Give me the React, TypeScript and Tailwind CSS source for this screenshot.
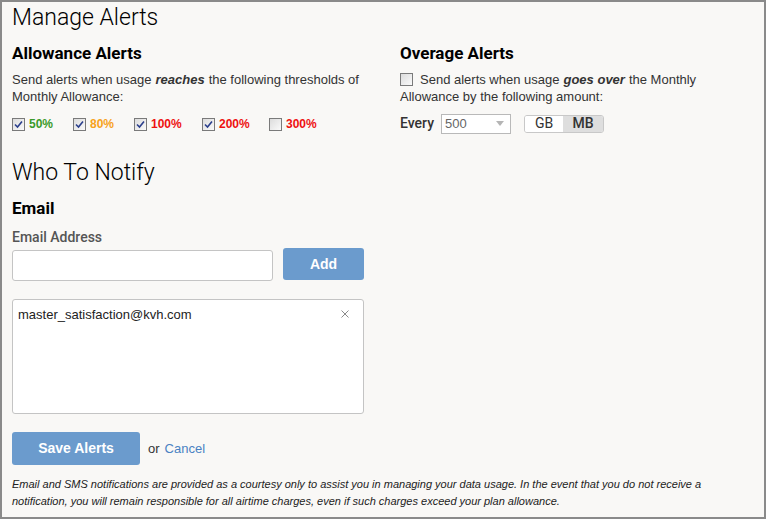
import React from "react";

const din = { fontFamily: "Roboto, 'Open Sans', sans-serif" };
const arial = { fontFamily: "'Liberation Sans', Arial, sans-serif" };

function Box({ checked }: { checked: boolean }) {
  return (
    <span className="inline-flex h-[13px] w-[13px] shrink-0 items-center justify-center border border-[#7a7a7a] bg-gradient-to-br from-[#dcdcdc] to-[#fafafa]">
      {checked ? (
        <svg width="9" height="9" viewBox="0 0 9 9">
          <path d="M1 4.5 L3.5 7 L8 1.5" fill="none" stroke="#2b3f8c" strokeWidth="1.6" />
        </svg>
      ) : null}
    </span>
  );
}

const thresholds = [
  { label: "50%", color: "text-[#3a9a2a]", checked: true, w: "w-[61px]" },
  { label: "80%", color: "text-[#f7a21b]", checked: true, w: "w-[61px]" },
  { label: "100%", color: "text-[#ee1111]", checked: true, w: "w-[68px]" },
  { label: "200%", color: "text-[#ee1111]", checked: true, w: "w-[67px]" },
  { label: "300%", color: "text-[#ee1111]", checked: false, w: "w-[67px]" },
];

export default function App() {
  return (
    <div className="h-[519px] w-[766px] overflow-hidden border-2 border-[#8a8a8a] bg-[#f9f8f6] text-[#333]" style={arial}>
      <div className="pl-[10px] pr-[10px]">
        <h1 className="pt-[1px] text-[23px] leading-[30px] font-light text-black" style={din}>
          Manage Alerts
        </h1>

        <div className="mt-[9px] flex">
          <div className="w-[388px]">
            <h2 className="text-[17px] leading-[22px] font-bold text-black" style={din}>
              Allowance Alerts
            </h2>
            <div className="mt-[7px] text-[13px] leading-[17px]">
              <div className="flex gap-[4px]">
                <span>Send alerts when usage</span>
                <b className="italic">reaches</b>
                <span>the following thresholds of</span>
              </div>
              <div>Monthly Allowance:</div>
            </div>
            <div className="mt-[11px] flex items-center">
              {thresholds.map((t) => (
                <label key={t.label} className={`flex items-center gap-[4px] ${t.w}`}>
                  <Box checked={t.checked} />
                  <span className={`text-[12px] leading-[17px] font-bold ${t.color}`}>{t.label}</span>
                </label>
              ))}
            </div>
          </div>

          <div className="w-[354px]">
            <h2 className="text-[17px] leading-[22px] font-bold text-black" style={din}>
              Overage Alerts
            </h2>
            <div className="mt-[7px] text-[13px] leading-[17px]">
              <div className="flex items-center gap-[4px]">
                <span className="mr-[3px] flex">
                  <Box checked={false} />
                </span>
                <span>Send alerts when usage</span>
                <b className="italic">goes over</b>
                <span>the Monthly</span>
              </div>
              <div>Allowance by the following amount:</div>
            </div>
            <div className="mt-[8px] flex items-center">
              <span className="text-[14px] font-medium text-[#333]" style={din}>
                Every
              </span>
              <div className="ml-[7px] flex h-[20px] w-[70px] items-center justify-between border border-[#b9b9b9] bg-white pl-[3px] pr-[6px]">
                <span className="text-[13px] text-[#666]">500</span>
                <svg width="8" height="5" viewBox="0 0 8 5">
                  <path d="M0 0 L8 0 L4 5 Z" fill="#b5b5b5" />
                </svg>
              </div>
              <div className="ml-[13px] flex h-[18px] overflow-hidden rounded-[3px] border border-[#c8c8c8] text-[14px]" style={din}>
                <span className="flex w-[38px] items-center justify-center bg-white text-[#333]">GB</span>
                <span className="flex w-[40px] items-center justify-center bg-[#dedede] font-medium text-[#333]">MB</span>
              </div>
            </div>
          </div>
        </div>

        <h1 className="mt-[24px] text-[23px] leading-[30px] font-light text-black" style={din}>
          Who To Notify
        </h1>
        <h2 className="mt-[9px] text-[17px] leading-[22px] font-bold text-black" style={din}>
          Email
        </h2>
        <label className="mt-[9px] block text-[14px] leading-[18px] font-medium text-[#555]" style={din}>
          Email Address
        </label>
        <div className="mt-[2px] flex items-start">
          <input className="mt-[2px] h-[31px] w-[261px] rounded-[3px] border border-[#c4c4c4] bg-white px-2 text-[13px] outline-none" />
          <button className="ml-[10px] h-[32px] w-[81px] rounded-[3px] bg-[#6b9bcd] text-[14px] font-bold text-white">Add</button>
        </div>

        <div className="mt-[18px] h-[115px] w-[352px] rounded-[3px] border border-[#c4c4c4] bg-white pt-[6px] pl-[5px] pr-[14px]">
          <div className="flex items-start justify-between">
            <span className="text-[13px] leading-[17px] text-[#222]">master_satisfaction@kvh.com</span>
            <svg className="mt-[4px]" width="8" height="8" viewBox="0 0 8 8">
              <path d="M0.5 0.5 L7.5 7.5 M7.5 0.5 L0.5 7.5" stroke="#8a8a8a" strokeWidth="1" />
            </svg>
          </div>
        </div>

        <div className="mt-[18px] flex items-center">
          <button className="h-[33px] w-[128px] rounded-[3px] bg-[#6b9bcd] text-[14px] font-bold text-white">Save Alerts</button>
          <span className="ml-[8px] text-[13px] text-[#333]">or</span>
          <a className="ml-[5px] text-[13px] text-[#4a82c3]">Cancel</a>
        </div>

        <p className="mt-[11px] text-[11px] leading-[17px] italic text-[#222]">
          Email and SMS notifications are provided as a courtesy only to assist you in managing your data usage. In the event that you do not receive a notification, you will remain responsible for all airtime charges, even if such charges exceed your plan allowance.
        </p>
      </div>
    </div>
  );
}
